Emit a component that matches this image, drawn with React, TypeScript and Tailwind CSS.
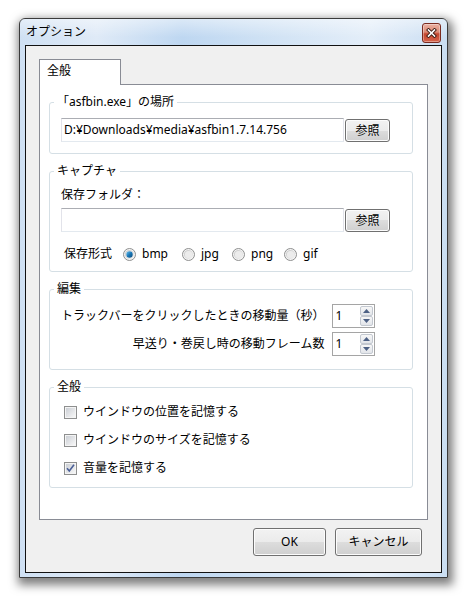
import type { ReactNode } from "react";

// Windows 7 style "オプション" dialog

function Group({ label, className, children }: { label: string; className: string; children: ReactNode }) {
  return (
    <div className={`rounded-[3px] border border-[#d5dfe5] pl-[11px] ${className}`}>
      <div className="-mt-[9px] -ml-[7px] w-fit bg-white px-[3px] leading-[16px]">{label}</div>
      {children}
    </div>
  );
}

function TextBox({ value }: { value: string }) {
  return (
    <div className="h-[24px] w-[283px] border border-[#abadb3] border-x-[#e2e3ea] border-b-[#e3e9ef] bg-white pl-[2px] leading-[22px]">
      {value}
    </div>
  );
}

function Btn({ children, className = "" }: { children: ReactNode; className?: string }) {
  return (
    <button
      className={`flex items-center justify-center rounded-[3px] border border-[#707070] bg-[linear-gradient(#f2f2f2_0%,#ebebeb_50%,#dddddd_50%,#cfcfcf_100%)] shadow-[inset_0_0_0_1px_#fcfcfc] text-[12px] leading-none text-black ${className}`}
    >
      {children}
    </button>
  );
}

function Radio({ checked = false }: { checked?: boolean }) {
  return (
    <svg width="13" height="13" viewBox="0 0 13 13" className="shrink-0">
      <defs>
        <linearGradient id="rring" x1="0" y1="0" x2="1" y2="1">
          <stop offset="0" stopColor="#c4c4c4" />
          <stop offset="1" stopColor="#f4f4f4" />
        </linearGradient>
        <linearGradient id="rdot" x1="0" y1="0" x2="1" y2="1">
          <stop offset="0" stopColor="#6fc3ef" />
          <stop offset="0.5" stopColor="#1b78b8" />
          <stop offset="1" stopColor="#0a4b7a" />
        </linearGradient>
      </defs>
      <circle cx="6.5" cy="6.5" r="6" fill="#f4f4f4" stroke="#8e8f8f" />
      <circle cx="6.5" cy="6.5" r="4.6" fill="url(#rring)" />
      <circle cx="6.5" cy="6.5" r="3.6" fill="#ececec" />
      {checked && <circle cx="6.5" cy="6.5" r="3.2" fill="url(#rdot)" />}
    </svg>
  );
}

function Check({ checked = false }: { checked?: boolean }) {
  return (
    <svg width="13" height="13" viewBox="0 0 13 13" className="shrink-0">
      <defs>
        <linearGradient id="cfill" x1="0" y1="0" x2="1" y2="1">
          <stop offset="0" stopColor="#cbcfd5" />
          <stop offset="1" stopColor="#f7f7f7" />
        </linearGradient>
      </defs>
      <rect x="0.5" y="0.5" width="12" height="12" fill="#f4f4f4" stroke="#8e8f8f" />
      <rect x="2" y="2" width="9" height="9" fill="url(#cfill)" />
      {checked && (
        <path d="M3 6.3 L5.3 9 L10 2.8" fill="none" stroke="#4a5f97" strokeWidth="1.6" />
      )}
    </svg>
  );
}

function SpinBtn({ up = false }: { up?: boolean }) {
  return (
    <div className="flex h-[10px] items-center justify-center rounded-[2px] border border-[#c3c8d0] bg-[linear-gradient(#f7f7f7,#e2e5ea)]">
      <svg width="7" height="4" viewBox="0 0 7 4">
        <path d={up ? "M0 4 L3.5 0 L7 4 Z" : "M0 0 L3.5 4 L7 0 Z"} fill="#4d6185" />
      </svg>
    </div>
  );
}

function Spinner({ value }: { value: string }) {
  return (
    <div className="flex h-[24px] w-[43px] border border-[#a5a5a5] bg-white">
      <div className="flex-1 pl-[2px] leading-[22px]">{value}</div>
      <div className="my-px mr-px flex w-[13px] flex-col">
        <SpinBtn up />
        <SpinBtn />
      </div>
    </div>
  );
}

export default function App() {
  const formats = [
    { name: "bmp", w: "w-[59px]", checked: true },
    { name: "jpg", w: "w-[50px]", checked: false },
    { name: "png", w: "w-[52px]", checked: false },
    { name: "gif", w: "w-[40px]", checked: false },
  ];

  return (
    <div className="h-[599px] w-[469px] overflow-hidden bg-white pl-[19px] pt-[18px] font-['Noto_Sans','Noto_Sans_CJK_JP',sans-serif] text-[12px] leading-[16px] text-black">
      <div className="flex h-[560px] w-[429px] flex-col rounded-t-[6px] border border-[#3b3b3b] bg-[linear-gradient(90deg,#cfe0f3_0%,#dfeaf7_18%,#bed7f1_38%,#d3e4f5_62%,#e4eef9_82%,#cadef2_100%)] shadow-[2px_4px_10px_3px_rgba(0,0,0,0.5)]">
        {/* title bar */}
        <div className="flex h-[26px] items-start justify-between rounded-t-[5px] bg-[linear-gradient(180deg,rgba(255,255,255,0.45),rgba(255,255,255,0)_70%)] pl-[6px] pr-[6px]">
          <span className="mt-[5px] text-[12px] leading-[16px]">オプション</span>
          <div className="mt-[4px] flex h-[20px] w-[19px] items-center justify-center rounded-[3px] border border-[#7a2b20] bg-[linear-gradient(#eab1a3_0%,#dd8a75_45%,#c4462f_55%,#d6634a_100%)] shadow-[inset_0_0_0_1px_rgba(255,255,255,0.35)]">
            <svg width="11" height="10" viewBox="0 0 11 10">
              <path d="M2.5 2 L8.5 8 M8.5 2 L2.5 8" stroke="#3a1810" strokeWidth="3.4" strokeLinecap="square" />
              <path d="M2.5 2 L8.5 8 M8.5 2 L2.5 8" stroke="#ffffff" strokeWidth="1.6" strokeLinecap="square" />
            </svg>
          </div>
        </div>

        {/* client area */}
        <div className="mx-[5px] flex h-[528px] flex-col border border-[#111111] bg-[#f0f0f0] px-[13px] pt-[13px]">
          <div className="relative z-10 -mb-px h-[26px] w-[82px] border border-b-0 border-[#898c95] bg-white pl-[7px] pt-[3px]">
            全般
          </div>
          <div className="flex h-[436px] w-[389px] flex-col gap-[17px] border border-[#898c95] bg-white pl-[9px] pr-[14px] pt-[17px]">
            <Group label="「asfbin.exe」の場所" className="pb-[11px]">
              <div className="mt-[8px] flex items-start gap-px">
                <TextBox value="D:¥Downloads¥media¥asfbin1.7.14.756" />
                <Btn className="mt-px h-[23px] w-[45px]">参照</Btn>
              </div>
            </Group>

            <Group label="キャプチャ" className="pb-[9px]">
              <div className="mt-[8px]">保存フォルダ：</div>
              <div className="mt-[5px] flex items-start gap-px">
                <TextBox value="" />
                <Btn className="mt-px h-[23px] w-[45px]">参照</Btn>
              </div>
              <div className="mt-[14px] flex items-center pl-[3px]">
                <span className="mr-[11px]">保存形式</span>
                {formats.map((f) => (
                  <div key={f.name} className={`flex items-center gap-[6px] ${f.w}`}>
                    <Radio checked={f.checked} />
                    <span>{f.name}</span>
                  </div>
                ))}
              </div>
            </Group>

            <Group label="編集" className="pb-[13px]">
              <div className="mt-[7px] grid grid-cols-[auto_auto] items-center justify-start gap-x-[8px] gap-y-[4px]">
                <span className="text-right">トラックバーをクリックしたときの移動量（秒）</span>
                <Spinner value="1" />
                <span className="text-right">早送り・巻戻し時の移動フレーム数</span>
                <Spinner value="1" />
              </div>
            </Group>

            <Group label="全般" className="pb-[11px]">
              <div className="mt-[9px] flex flex-col gap-[12px] pl-[3px]">
                <label className="flex items-center gap-[6px]">
                  <Check />
                  <span>ウインドウの位置を記憶する</span>
                </label>
                <label className="flex items-center gap-[6px]">
                  <Check />
                  <span>ウインドウのサイズを記憶する</span>
                </label>
                <label className="flex items-center gap-[6px]">
                  <Check checked />
                  <span>音量を記憶する</span>
                </label>
              </div>
            </Group>
          </div>

          <div className="mt-[8px] flex justify-end gap-[9px] pr-[6px]">
            <Btn className="h-[28px] w-[73px] border-[#3c7fb1] shadow-[inset_0_0_0_1px_#6fd0f5]">OK</Btn>
            <Btn className="h-[28px] w-[87px]">キャンセル</Btn>
          </div>
        </div>
      </div>
    </div>
  );
}
